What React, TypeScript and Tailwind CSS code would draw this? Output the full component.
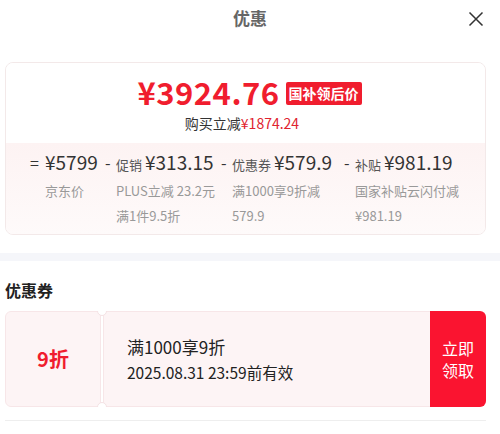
import React from "react";

const F = { fontFamily: '"Noto Sans CJK SC", "Noto Sans", sans-serif' };

function Col({ sign, signW, label, value, sub }: { sign: string; signW: string; label?: string; value: string; sub: string[] }) {
  return (
    <div className="flex">
      <div className={`${signW} text-[16px] leading-[26px] text-[#333]`}>{sign}</div>
      <div className="flex flex-col">
        <div className="flex items-baseline h-[26px]">
          {label && <span className="text-[13px] text-[#555] mr-[3px]">{label}</span>}
          <span className="text-[19px] leading-[26px] text-[#333] font-normal">{value}</span>
        </div>
        <div className="mt-[3px] text-[13px] leading-[25px] text-[#999]">
          {sub.map((s, i) => (
            <div key={i}>{s}</div>
          ))}
        </div>
      </div>
    </div>
  );
}

export default function App() {
  return (
    <div className="w-[500px] h-[434px] bg-white overflow-hidden relative" style={F}>
      <div className="h-[36px] flex items-center justify-center relative">
        <span className="text-[17px] font-bold text-[#666]">优惠</span>
        <svg className="absolute left-[468px] top-[11px]" width="16" height="16" viewBox="0 0 16 16">
          <path d="M1.5 1.5 L14.5 14.5 M14.5 1.5 L1.5 14.5" stroke="#333" strokeWidth="1.5" fill="none" />
        </svg>
      </div>

      <div className="mt-[26px] mx-[5px] w-[481px] h-[173px] rounded-[8px] border border-[#f3e9e9] overflow-hidden flex flex-col">
        <div className="h-[80px] bg-white flex flex-col items-center pt-[12px]">
          <div className="flex items-center h-[34px]">
            <span className="text-[31px] font-bold text-[#f01d2e] leading-[32px] tracking-[0.5px] ml-[8px]">¥3924.76</span>
            <span className="ml-[6px] bg-[#f01d2e] text-white text-[14px] font-bold rounded-[2px] px-[3px] h-[23px] flex items-center mt-[2px]">国补领后价</span>
          </div>
          <div className="text-[14px] text-[#333] leading-[20px] mt-[4px] ml-[-7px]">
            购买立减<span className="text-[#e0232f]">¥1874.24</span>
          </div>
        </div>
        <div className="flex-1 bg-gradient-to-b from-[#fdf3f3] to-[#fefafa] flex pl-[24px] pt-[6px]">
          <div className="w-[75px]">
            <Col sign="=" signW="w-[15px]" value="¥5799" sub={["京东价"]} />
          </div>
          <div className="w-[116px]">
            <Col sign="-" signW="w-[11px]" label="促销" value="¥313.15" sub={["PLUS立减 23.2元", "满1件9.5折"]} />
          </div>
          <div className="w-[123px]">
            <Col sign="-" signW="w-[11px]" label="优惠券" value="¥579.9" sub={["满1000享9折减", "579.9"]} />
          </div>
          <div>
            <Col sign="-" signW="w-[11px]" label="补贴" value="¥981.19" sub={["国家补贴云闪付减", "¥981.19"]} />
          </div>
        </div>
      </div>

      <div className="mt-[18px] h-[8px] bg-[#f5f6fa]" />

      <div className="mt-[17px] ml-[5px] text-[16px] font-bold text-[#222] leading-[24px]">优惠券</div>

      <div className="mt-[9px] mx-[5px] w-[481px] h-[96px] flex relative overflow-hidden">
        <div className="w-[96px] bg-[#fdf4f5] border border-[#f7e6e8] rounded-l-[6px] flex items-center justify-center">
          <span className="text-[20px] font-bold text-[#f01d2e]">9折</span>
        </div>
        <div className="w-[2px]" />
        <div className="flex-1 bg-[#fdf4f5] border border-[#f7e6e8] border-r-0 flex flex-col justify-center pl-[23px]">
          <div className="text-[17px] text-[#222] leading-[24px]">满1000享9折</div>
          <div className="text-[15.5px] text-[#222] leading-[22px] mt-[2px]">2025.08.31 23:59前有效</div>
        </div>
        <div className="w-[56px] bg-[#fa1430] rounded-r-[6px] flex flex-col items-center justify-center text-white text-[16px] leading-[22px]">
          <span>立即</span>
          <span>领取</span>
        </div>
        <div className="absolute left-[92px] top-[-5px] w-[10px] h-[10px] rounded-full bg-white border border-[#f4e2e4]" />
        <div className="absolute left-[92px] bottom-[-5px] w-[10px] h-[10px] rounded-full bg-white border border-[#f4e2e4]" />
      </div>

      <div className="mt-[13px] mx-[5px] w-[481px] h-px bg-[#eeeeee]" />
    </div>
  );
}
